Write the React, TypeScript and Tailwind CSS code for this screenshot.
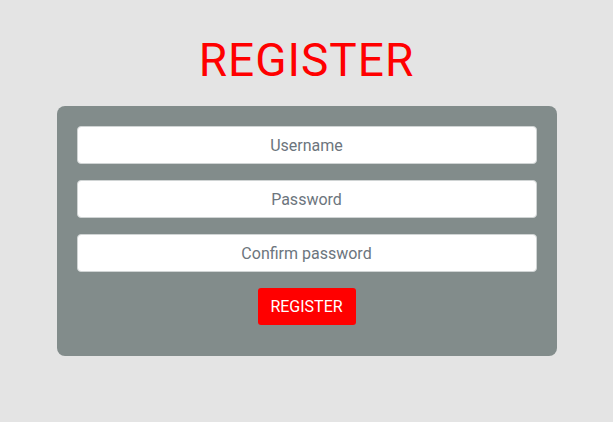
export default function App() {
  return (
    <div className="min-h-screen bg-[#e4e4e4] flex flex-col items-center pt-[30px]" style={{ fontFamily: "Roboto, 'Liberation Sans', sans-serif" }}>
      <h1 className="text-[46px] leading-[60px] tracking-[1px] text-[#ff0000] font-normal">REGISTER</h1>

      <form className="mt-[16px] w-[500px] bg-[#828c8b] rounded-[8px] px-[20px] pt-[20px] pb-[31px] flex flex-col items-center gap-[16px]">
        <input
          type="text"
          placeholder="Username"
          className="w-full h-[38px] bg-white border border-[#d0d4d4] rounded-[4px] text-center text-[16px] text-[#555] placeholder:text-[#6c757d] outline-none"
        />
        <input
          type="password"
          placeholder="Password"
          className="w-full h-[38px] bg-white border border-[#d0d4d4] rounded-[4px] text-center text-[16px] text-[#555] placeholder:text-[#6c757d] outline-none"
        />
        <input
          type="password"
          placeholder="Confirm password"
          className="w-full h-[38px] bg-white border border-[#d0d4d4] rounded-[4px] text-center text-[16px] text-[#555] placeholder:text-[#6c757d] outline-none"
        />
        <button
          type="button"
          className="w-[98px] h-[37px] bg-[#ff0000] text-white text-[16px] rounded-[3px]"
        >
          REGISTER
        </button>
      </form>
    </div>
  );
}
